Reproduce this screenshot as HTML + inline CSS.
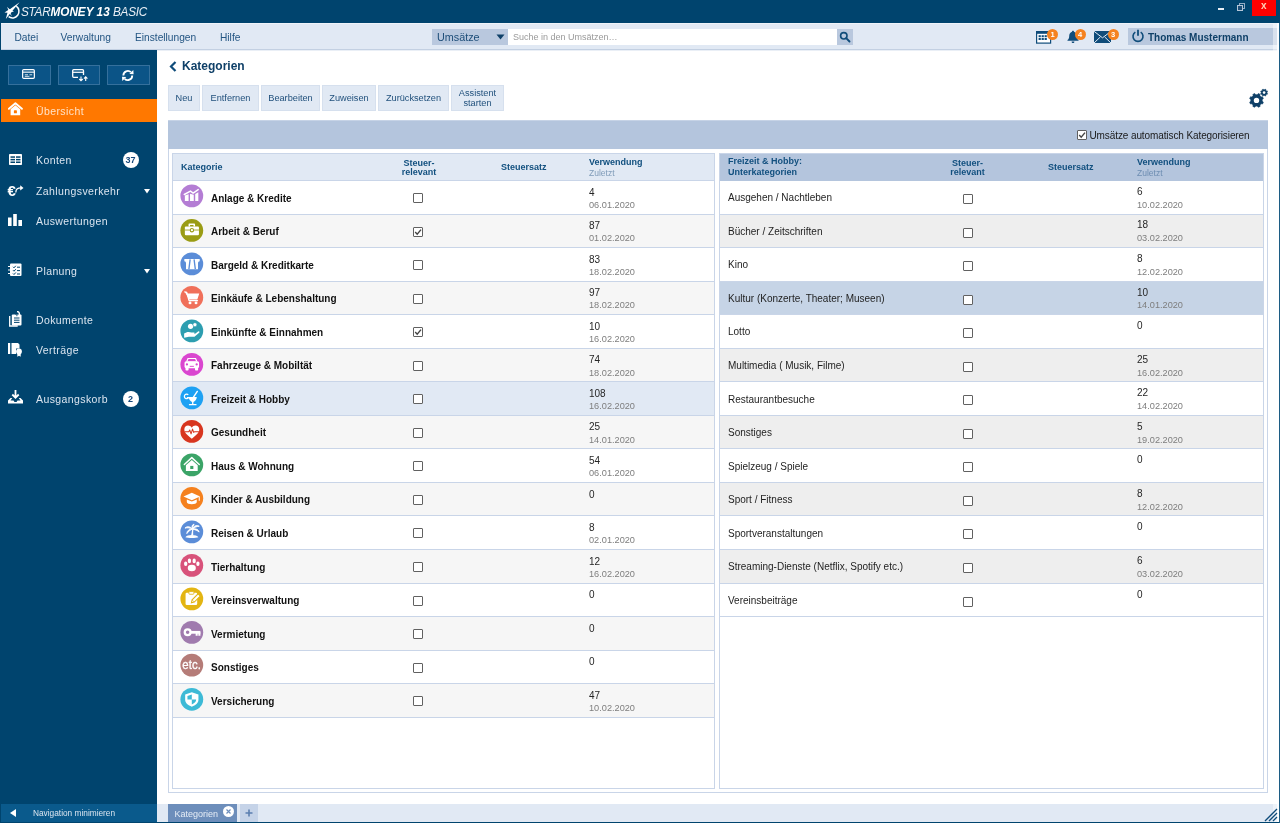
<!DOCTYPE html>
<html><head><meta charset="utf-8"><title>StarMoney 13 Basic</title>
<style>
*{box-sizing:border-box;margin:0;padding:0}
html,body{width:1280px;height:823px;overflow:hidden;background:#fff}
#w{position:absolute;left:0;top:0;width:1280px;height:823px;will-change:transform}
body{font-family:"Liberation Sans",sans-serif;position:relative;color:#111}
.a,.t,.cb,.row,.btn,.nav,.mi{position:absolute}
.t{white-space:nowrap;line-height:1}
.cb{border:1px solid #616161;background:#fff;border-radius:1px}
.cb svg{position:absolute;left:-1px;top:-1px}
.nav{left:36px;font-size:10.5px;letter-spacing:.4px;color:#dbe5f0;white-space:nowrap;line-height:12px}
.mi{top:31.500px;font-size:10.2px;color:#235582;line-height:12px;white-space:nowrap}
.btn{top:85px;height:26px;background:#e1e9f4;border:1px solid #d6e0ee;color:#1f4f7b;font-size:9.2px;text-align:center;line-height:10px;display:flex;align-items:center;justify-content:center}
.row{height:34px;border-bottom:1px solid #c9d5e8}
.hd{font-weight:bold;font-size:9px;color:#12507f}
.nm{font-weight:bold;font-size:10px;color:#111}
.rn{font-size:10px;color:#1e1e1e}
.ct{font-size:10px;color:#262626}
.dt{font-size:9.2px;color:#7e7e7e}
.badge{position:absolute;width:11px;height:11px;border-radius:50%;background:#f5821f;color:#fff;font-size:7.5px;font-weight:bold;text-align:center;line-height:11px}
.sb{position:absolute;top:65px;width:42.500px;height:20px;background:#0b5487;border:1px solid #35709c}
.nb{position:absolute;left:122.500px;width:16px;height:16px;border-radius:50%;background:#fff;color:#14477a;font-size:9px;font-weight:bold;text-align:center;line-height:16.500px}
</style></head><body>
<div id="w">
<div class="a" style="left:0;top:0;width:1280px;height:823px;background:#00446e"></div>
<div class="a" style="left:1px;top:23px;width:1278px;height:27px;background:#e1e9f4;border-top:1px solid #eef3f9;border-bottom:1px solid #c3d0e2"></div>
<div class="a" style="left:157px;top:50px;width:1122px;height:754px;background:#fff;border-top:1px solid #eaeff6"></div>
<div class="a" style="left:157px;top:804px;width:1122px;height:18px;background:#e1e9f4"></div>
<div class="a" style="left:1px;top:804px;width:156px;height:18px;background:#0a5a8c"></div>
<svg class="a" style="left:0px;top:0px" width="24" height="22" viewBox="0 0 24 22"><path d="M16.300 6.200A6.300 6.300 0 0 1 8.600 16.700" fill="none" stroke="#fff" stroke-width="1.500"/><path d="M19.600 2.300L11 12.600 5.800 19l2.300-8.600z" fill="#fff"/><path d="M4.500 12.400l4.500-2.800 5 1.700-4.400 1.700z" fill="#fff"/><path d="M7 6.800l3.600 3.400-1.600 1.300z" fill="#fff"/><path d="M10.200 12l1.600 4.200-2.600-3.200z" fill="#fff"/></svg>
<div class="t" style="left:21px;top:4.500px;font-size:13px;color:#fff;font-style:italic;line-height:14px;transform:scaleX(.905);transform-origin:0 0"><span style="letter-spacing:-.3px;color:#e8eef5">STAR</span><b>MONEY 13</b>&nbsp;<span style="letter-spacing:-.3px;color:#e8eef5">BASIC</span></div>
<div class="a" style="left:1218px;top:8px;width:6px;height:2px;background:#e6edf4"></div>
<div class="a" style="left:1239px;top:3px;width:6px;height:6px;border:1.500px solid #93abc4"></div>
<div class="a" style="left:1237px;top:5px;width:6px;height:6px;border:1.500px solid #b4c6d8;background:#1d4f78"></div>
<div class="a" style="left:1252px;top:0;width:24px;height:16px;background:#ff0000"></div>
<div class="t" style="left:1261px;top:1px;font-size:10px;font-weight:bold;color:#ffd0b4;line-height:10px">x</div>
<div class="mi" style="left:14.5px">Datei</div>
<div class="mi" style="left:60.5px">Verwaltung</div>
<div class="mi" style="left:135px">Einstellungen</div>
<div class="mi" style="left:220px">Hilfe</div>
<div class="a" style="left:432px;top:29px;width:76px;height:16px;background:#b9c8de"></div>
<div class="t" style="left:437px;top:30.500px;font-size:10.800px;color:#1d4d78;line-height:12px">Umsätze</div>
<svg class="a" style="left:496px;top:34px" width="9" height="6" viewBox="0 0 9 6"><path d="M.5.500h8L4.500 5.500z" fill="#0f4068"/></svg>
<div class="a" style="left:508px;top:29px;width:329px;height:16px;background:#fff"></div>
<div class="t" style="left:513px;top:32px;font-size:9px;color:#9a9a9a;line-height:10px">Suche in den Umsätzen…</div>
<div class="a" style="left:837px;top:29px;width:16px;height:16px;background:#b9c8de"></div>
<svg class="a" style="left:839px;top:31px" width="12" height="12" viewBox="0 0 12 12"><circle cx="4.800" cy="4.800" r="3.200" fill="none" stroke="#0f4c7a" stroke-width="1.600"/><path d="M7.200 7.200l3.300 3.300" stroke="#0f4c7a" stroke-width="1.900" stroke-linecap="round"/></svg>
<svg class="a" style="left:1036px;top:31px" width="16" height="13" viewBox="0 0 16 13"><rect x=".600" y=".600" width="14" height="11.500" fill="#fff" stroke="#0f4c7a" stroke-width="1.200"/><rect x=".600" y=".600" width="14" height="2.200" fill="#0f4c7a"/><g fill="#0f4c7a"><rect x="2.600" y="4.200" width="2.200" height="2"/><rect x="5.600" y="4.200" width="2.200" height="2"/><rect x="8.600" y="4.200" width="2.200" height="2"/><rect x="2.600" y="7" width="2.200" height="2"/><rect x="5.600" y="7" width="2.200" height="2"/><rect x="8.600" y="7" width="2.200" height="2"/></g></svg>
<div class="badge" style="left:1047px;top:28.500px">1</div>
<svg class="a" style="left:1066px;top:30px" width="14" height="14" viewBox="0 0 14 14"><path d="M7 .800c.700 0 1 .500 1 1 2 .600 2.800 2.400 2.800 4.400 0 2 .600 3 1.700 3.800v.800H1.500V10c1.100-.800 1.700-1.800 1.700-3.800 0-2 .800-3.800 2.800-4.400 0-.500.300-1 1-1z" fill="#0f4c7a"/><path d="M5.600 11.600h2.800c0 1-.600 1.500-1.400 1.500s-1.400-.500-1.400-1.500z" fill="#0f4c7a"/></svg>
<div class="badge" style="left:1074.500px;top:28.500px">4</div>
<svg class="a" style="left:1094px;top:31px" width="18" height="12" viewBox="0 0 18 12"><rect x="0" y="0" width="17" height="12" fill="#0f4c7a"/><path d="M0 .300l8.500 6.500L17 .300M0 12l6.300-6M17 12l-6.300-6" stroke="#e1e9f4" stroke-width="1" fill="none"/></svg>
<div class="badge" style="left:1107.500px;top:28.500px">3</div>
<div class="a" style="left:1128px;top:28px;width:151px;height:17px;background:#b9c8de"></div>
<svg class="a" style="left:1131px;top:29px" width="14" height="14" viewBox="0 0 14 14"><path d="M4.300 3.200a5 5 0 1 0 5.400 0" fill="none" stroke="#0f4c7a" stroke-width="1.600"/><path d="M7 .800v6" stroke="#0f4c7a" stroke-width="1.800"/></svg>
<div class="t" style="left:1148px;top:31.500px;font-size:10px;font-weight:bold;color:#0f4068;line-height:11px">Thomas Mustermann</div>
<div class="a" style="left:1273px;top:24px;width:4px;height:798px;background:rgba(255,255,255,.45)"></div>
<div class="a" style="left:1277px;top:23px;width:2px;height:799px;background:rgba(255,255,255,.92)"></div>
<div class="a" style="left:1279px;top:23px;width:1px;height:800px;background:#1c5c84"></div>
<div class="sb" style="left:8px;width:42.5px"></div>
<div class="sb" style="left:57.5px;width:42.5px"></div>
<div class="sb" style="left:107px;width:42.5px"></div>
<svg class="a" style="left:22px;top:69px" width="13" height="10.500" viewBox="0 0 14 12" preserveAspectRatio="none"><rect x=".700" y=".700" width="12.600" height="10" rx="1.200" fill="none" stroke="#fff" stroke-width="1.300"/><path d="M1 3.600h12" stroke="#fff" stroke-width="1.300"/><path d="M3 6.600h3.500M8 6.600h3M3 8.400h5" stroke="#fff" stroke-width=".9"/></svg>
<svg class="a" style="left:72px;top:69px" width="17" height="13" viewBox="0 0 17 13"><path d="M11.500 6V1.700a1 1 0 0 0-1-1H1.700a1 1 0 0 0-1 1v5.600a1 1 0 0 0 1 1H6" fill="none" stroke="#fff" stroke-width="1.300"/><path d="M1 3.300h10.500" stroke="#fff" stroke-width="1.200"/><path d="M9 7.500v4M7.300 10l1.700 1.800 1.700-1.800M13.700 12V8M12 9.700l1.700-1.800 1.700 1.800" stroke="#fff" stroke-width="1.100" fill="none"/></svg>
<svg class="a" style="left:121px;top:69px" width="14" height="13" viewBox="0 0 14 13"><path d="M2.400 6.400A4.400 4.400 0 0 1 9.900 3.200M11.200 6.600A4.400 4.400 0 0 1 3.700 9.800" fill="none" stroke="#fff" stroke-width="1.900"/><path d="M8.300 4.900l4.300.3-.3-4.300zM5.300 8.100L1 7.800l.3 4.300z" fill="#fff"/></svg>
<div class="a" style="left:1px;top:99px;width:156px;height:23px;background:#ff7800"></div>
<svg class="a" style="left:8px;top:102px" width="15" height="14" viewBox="0 0 15 14"><path d="M.900 6.800L7.400 1.300l6.500 5.500" stroke="#fff" stroke-width="1.900" fill="none" stroke-linecap="round" stroke-linejoin="round"/><path d="M2.600 7.300l4.800-4 4.800 4v5.900H2.600z" fill="#fff"/><rect x="5.900" y="8.300" width="3" height="3" rx=".6" fill="#ff7800"/></svg>
<div class="nav" style="top:104.500px;color:#ffe3c8">Übersicht</div>
<svg class="a" style="left:9px;top:154px" width="13" height="11" viewBox="0 0 13 11"><rect width="13" height="11" rx=".8" fill="#fff"/><g fill="#00446e"><rect x="1.500" y="2.300" width="4.500" height="1.500"/><rect x="7" y="2.300" width="4.500" height="1.500"/><rect x="1.500" y="4.900" width="4.500" height="1.500"/><rect x="7" y="4.900" width="4.500" height="1.500"/><rect x="1.500" y="7.500" width="4.500" height="1.500"/><rect x="7" y="7.500" width="4.500" height="1.500"/></g></svg>
<div class="nav" style="top:154px">Konten</div>
<div class="nb" style="top:152px">37</div>
<div class="t" style="left:7.500px;top:184px;font-size:15px;font-weight:bold;color:#fff;line-height:14px">€</div>
<svg class="a" style="left:15px;top:185px" width="9" height="8" viewBox="0 0 9 8"><path d="M.800 7.500C.800 4 3 2.800 6 2.800" stroke="#fff" stroke-width="1.300" fill="none"/><path d="M5.200 .300L8.500 2.900 5.200 5.500z" fill="#fff"/></svg>
<div class="nav" style="top:185px">Zahlungsverkehr</div>
<svg class="a" style="left:144px;top:189px" width="6" height="5" viewBox="0 0 6 5"><path d="M0 0h6L3 4.500z" fill="#fff"/></svg>
<svg class="a" style="left:8px;top:214px" width="15" height="12" viewBox="0 0 15 12"><rect x="0" y="3.500" width="3.600" height="8.500" fill="#fff"/><rect x="5.200" y="0" width="3.600" height="12" fill="#fff"/><rect x="10.400" y="6" width="3.600" height="6" fill="#fff"/></svg>
<div class="nav" style="top:215px">Auswertungen</div>
<svg class="a" style="left:8px;top:263px" width="14" height="14" viewBox="0 0 14 14"><rect x="2" y=".500" width="11.500" height="12.500" rx="1" fill="#fff"/><path d="M0 3.500h3.500M0 7h3.500M0 10.500h3.500" stroke="#fff" stroke-width="1.200"/><path d="M5 3.800l1 1 1.800-2M5 7.200l1 1 1.800-2M5 10.500l1 1 1.800-2" stroke="#00446e" stroke-width="1" fill="none"/><path d="M9 4.200h3M9 7.600h3M9 11h3" stroke="#00446e" stroke-width="1"/><path d="M.500 3.500h2.500M.500 7h2.500M.500 10.500h2.500" stroke="#00446e" stroke-width=".01"/></svg>
<div class="nav" style="top:265px">Planung</div>
<svg class="a" style="left:144px;top:269px" width="6" height="5" viewBox="0 0 6 5"><path d="M0 0h6L3 4.500z" fill="#fff"/></svg>
<svg class="a" style="left:9px;top:311px" width="14" height="16" viewBox="0 0 14 16"><path d="M.700 5v10h8" stroke="#fff" stroke-width="1.300" fill="none"/><rect x="2.800" y="3.500" width="9.700" height="11" rx="1" fill="#fff"/><path d="M8 .600c2.500 0 2.500 3 2.500 3v2" stroke="#fff" stroke-width="1.300" fill="none"/><path d="M5 7h5.500M5 9.200h5.500M5 11.400h5.500" stroke="#00446e" stroke-width="1"/><path d="M6.500 3.500V2.200c0-1 1.400-1 1.400 0v3" stroke="#00446e" stroke-width=".9" fill="none"/></svg>
<div class="nav" style="top:314px">Dokumente</div>
<svg class="a" style="left:8px;top:342px" width="15" height="15" viewBox="0 0 15 15"><rect x="0" y="1" width="2.200" height="11" fill="#fff"/><path d="M3.500 1h6.500l1.500 1.500V6.500H8V12H3.500z" fill="#fff"/><circle cx="11" cy="9.500" r="2.900" fill="#fff"/><path d="M9.300 11.500V14.800l1.700-1.100 1.700 1.100V11.500z" fill="#fff"/></svg>
<div class="nav" style="top:344px">Verträge</div>
<svg class="a" style="left:8px;top:390px" width="15" height="14" viewBox="0 0 15 14"><path d="M7.500 0v7M4.300 4.500l3.200 3.300 3.200-3.300" stroke="#fff" stroke-width="1.800" fill="none"/><path d="M0 13.500V10.500l2.500-2.500h1.800L2.500 10.500h3l1 1.500h2l1-1.500h3L10.700 8h1.800l2.500 2.500v3z" fill="#fff"/></svg>
<div class="nav" style="top:393px">Ausgangskorb</div>
<div class="nb" style="top:391px">2</div>
<svg class="a" style="left:10px;top:809px" width="6" height="8" viewBox="0 0 6 8"><path d="M6 0v8L0 4z" fill="#fff"/></svg>
<div class="t" style="left:33px;top:808px;font-size:8.300px;color:#dbe5f0;line-height:10px">Navigation minimieren</div>
<svg class="a" style="left:169px;top:61px" width="8" height="11" viewBox="0 0 8 11"><path d="M6.500 1L2 5.500 6.500 10" stroke="#0f4c7a" stroke-width="2.200" fill="none"/></svg>
<div class="t" style="left:182px;top:60px;font-size:12px;font-weight:bold;color:#0f4068;line-height:13px;letter-spacing:0">Kategorien</div>
<div class="btn" style="left:168px;width:32px">Neu</div>
<div class="btn" style="left:202px;width:57px">Entfernen</div>
<div class="btn" style="left:261px;width:59px">Bearbeiten</div>
<div class="btn" style="left:322px;width:54px">Zuweisen</div>
<div class="btn" style="left:378px;width:71px">Zurücksetzen</div>
<div class="btn" style="left:451px;width:53px">Assistent<br>starten</div>
<svg class="a" style="left:1249px;top:88px" width="20" height="20" viewBox="0 0 20 20"><path d="M13.13 13.29L14.29 14.09L13.50 16.01L12.11 15.75L10.85 17.01L11.11 18.40L9.19 19.19L8.39 18.03L6.61 18.03L5.81 19.19L3.89 18.40L4.15 17.01L2.89 15.75L1.50 16.01L0.71 14.09L1.87 13.29L1.87 11.51L0.71 10.71L1.50 8.79L2.89 9.05L4.15 7.79L3.89 6.40L5.81 5.61L6.61 6.77L8.39 6.77L9.19 5.61L11.11 6.40L10.85 7.79L12.11 9.05L13.50 8.79L14.29 10.71L13.13 11.51z" fill="#0f4068" stroke="#0f4068" stroke-width=".7" stroke-linejoin="round"/><circle cx="7.5" cy="12.4" r="2.7" fill="#fff"/><path d="M17.96 5.05L18.59 5.47L18.18 6.46L17.45 6.30L16.80 6.95L16.96 7.68L15.97 8.09L15.55 7.46L14.65 7.46L14.23 8.09L13.24 7.68L13.40 6.95L12.75 6.30L12.02 6.46L11.61 5.47L12.24 5.05L12.24 4.15L11.61 3.73L12.02 2.74L12.75 2.90L13.40 2.25L13.24 1.52L14.23 1.11L14.65 1.74L15.55 1.74L15.97 1.11L16.96 1.52L16.80 2.25L17.45 2.90L18.18 2.74L18.59 3.73L17.96 4.15z" fill="#0f4068" stroke="#0f4068" stroke-width=".5" stroke-linejoin="round"/><circle cx="15.1" cy="4.6" r="1.3" fill="#fff"/></svg>
<div class="a" style="left:168px;top:120px;width:1100px;height:29px;background:linear-gradient(#c6d3e6 0,#c6d3e6 1px,#b4c5dd 1px)"></div>
<div class="cb" style="left:1077px;top:130px;width:10px;height:10px"><svg width="10" height="10" viewBox="0 0 10 10"><path d="M2.200 5l2 2.200L8 2.600" stroke="#444" stroke-width="1.400" fill="none"/></svg></div>
<div class="t" style="left:1089.500px;top:130px;font-size:10px;color:#1a1a1a;line-height:11px;letter-spacing:-.1px">Umsätze automatisch Kategorisieren</div>
<div class="a" style="left:168px;top:149px;width:1100px;height:644px;border:1px solid #c9d5e8;border-top:none;background:#fff"></div>
<div class="a" style="left:172px;top:153px;width:543px;height:636px;border:1px solid #c9d5e8;background:#fff"></div>
<div class="a" style="left:173px;top:154px;width:541px;height:27px;background:#e1e9f4;border-bottom:1px solid #c9d5e8"></div>
<div class="t hd" style="left:181px;top:162.500px">Kategorie</div>
<div class="t hd" style="left:389px;width:60px;top:158.500px;text-align:center;line-height:9px">Steuer-<br>relevant</div>
<div class="t hd" style="left:501px;top:163px">Steuersatz</div>
<div class="t hd" style="left:589px;top:158px">Verwendung</div>
<div class="t" style="left:589px;top:169px;font-size:8.500px;color:#7f9bb8">Zuletzt</div>
<div class="row" style="left:173px;top:181px;width:541px;height:34px;background:#fff"></div>
<svg class="a" style="left:180px;top:184px" width="25" height="25" viewBox="0 0 25 25"><g transform="translate(.4 0.45) scale(1.0364)"><circle cx="11" cy="11" r="11" fill="#b47dd4"/><path d="M4.300 16v-5.400l3.600-1.200V16zM9.300 16V9l3.600 1V16zM14.300 16V9.300l3-1.800V16z" fill="#fff"/><path d="M3.700 9.700l6-3.300 2.600 1.900L17.200 5" stroke="#fff" stroke-width="1.400" fill="none" stroke-linecap="round" stroke-linejoin="round"/></g></svg>
<div class="t nm" style="left:211px;top:194px">Anlage &amp; Kredite</div>
<div class="cb" style="left:413px;top:193px;width:10px;height:10px"></div>
<div class="t ct" style="left:589px;top:188px">4</div>
<div class="t dt" style="left:589px;top:201px">06.01.2020</div>
<div class="row" style="left:173px;top:215px;width:541px;height:33px;background:#f6f6f6"></div>
<svg class="a" style="left:180px;top:219px" width="25" height="25" viewBox="0 0 25 25"><g transform="translate(.4 0.04) scale(1.0364)"><circle cx="11" cy="11" r="11" fill="#9a9c14"/><rect x="4.300" y="7.200" width="13.600" height="8.500" rx="1" fill="#fff"/><path d="M8.600 7.200V5h4.800v2.200" stroke="#fff" stroke-width="1.500" fill="none" stroke-linejoin="round"/><rect x="4.300" y="10.200" width="13.600" height=".8" fill="#9a9c14"/><circle cx="11.100" cy="10.800" r="1.600" fill="#fff" stroke="#9a9c14" stroke-width="1"/></g></svg>
<div class="t nm" style="left:211px;top:227px">Arbeit &amp; Beruf</div>
<div class="cb" style="left:413px;top:227px;width:10px;height:10px"><svg width="10" height="10" viewBox="0 0 10 10"><path d="M2.200 5l2 2.200L8 2.600" stroke="#444" stroke-width="1.400" fill="none"/></svg></div>
<div class="t ct" style="left:589px;top:221px">87</div>
<div class="t dt" style="left:589px;top:234px">01.02.2020</div>
<div class="row" style="left:173px;top:248px;width:541px;height:34px;background:#fff"></div>
<svg class="a" style="left:180px;top:252px" width="25" height="25" viewBox="0 0 25 25"><g transform="translate(.4 0.53) scale(1.0364)"><circle cx="11" cy="11" r="11" fill="#5b8dd8"/><path d="M3.800 6.200h14.800v2.200c-1 .2-1.600.8-1.600 1.800v6H5.400v-6c0-1-.6-1.600-1.600-1.800z" fill="#fff"/><path d="M9.400 6.600L8.200 16M13.200 6.600l1.200 9.400" stroke="#5b8dd8" stroke-width="1.300"/></g></svg>
<div class="t nm" style="left:211px;top:261px">Bargeld &amp; Kreditkarte</div>
<div class="cb" style="left:413px;top:260px;width:10px;height:10px"></div>
<div class="t ct" style="left:589px;top:255px">83</div>
<div class="t dt" style="left:589px;top:268px">18.02.2020</div>
<div class="row" style="left:173px;top:282px;width:541px;height:33px;background:#f6f6f6"></div>
<svg class="a" style="left:180px;top:286px" width="25" height="25" viewBox="0 0 25 25"><g transform="translate(.4 0.02) scale(1.0364)"><circle cx="11" cy="11" r="11" fill="#f0705a"/><path d="M4.200 5.600l2 .6.500 1h11.500l-1.900 5.800H8.400z" fill="#fff"/><path d="M4.200 5.600l1.900.5 2.200 8h8.200" stroke="#fff" stroke-width="1.200" fill="none" stroke-linecap="round" stroke-linejoin="round"/><circle cx="9.300" cy="16.300" r="1.400" fill="#fff"/><circle cx="15.100" cy="16.300" r="1.400" fill="#fff"/></g></svg>
<div class="t nm" style="left:211px;top:294px">Einkäufe &amp; Lebenshaltung</div>
<div class="cb" style="left:413px;top:294px;width:10px;height:10px"></div>
<div class="t ct" style="left:589px;top:288px">97</div>
<div class="t dt" style="left:589px;top:301px">18.02.2020</div>
<div class="row" style="left:173px;top:315px;width:541px;height:34px;background:#fff"></div>
<svg class="a" style="left:180px;top:319px" width="25" height="25" viewBox="0 0 25 25"><g transform="translate(.4 0.51) scale(1.0364)"><circle cx="11" cy="11" r="11" fill="#2d9eb0"/><circle cx="9.800" cy="6.600" r="2.500" fill="#fff"/><circle cx="14" cy="5" r="1.900" fill="#fff" stroke="#2d9eb0" stroke-width=".5"/><path d="M3.600 13.600c2.200-1.800 4.800-2 7-1h2.400c1.100 0 1.100 1.500 0 1.500h-2.500 3.300l3.300-2.600c1-.6 1.800.5 1 1.300l-4.500 3.900H8.200l-4.600.9z" fill="#fff"/></g></svg>
<div class="t nm" style="left:211px;top:328px">Einkünfte &amp; Einnahmen</div>
<div class="cb" style="left:413px;top:327px;width:10px;height:10px"><svg width="10" height="10" viewBox="0 0 10 10"><path d="M2.200 5l2 2.200L8 2.600" stroke="#444" stroke-width="1.400" fill="none"/></svg></div>
<div class="t ct" style="left:589px;top:322px">10</div>
<div class="t dt" style="left:589px;top:335px">16.02.2020</div>
<div class="row" style="left:173px;top:349px;width:541px;height:33px;background:#f6f6f6"></div>
<svg class="a" style="left:180px;top:353px" width="25" height="25" viewBox="0 0 25 25"><g transform="translate(.4 0.00) scale(1.0364)"><circle cx="11" cy="11" r="11" fill="#da46cf"/><path d="M7 4.800h8l1.500 3.400h-11z" fill="#fff"/><path d="M7.800 5.800h6.400l.9 2.200H6.900z" fill="#da46cf"/><rect x="4" y="7.900" width="14" height="6.700" rx="1.600" fill="#fff"/><rect x="4.900" y="13.600" width="3" height="3.200" rx=".7" fill="#fff"/><rect x="14.100" y="13.600" width="3" height="3.200" rx=".7" fill="#fff"/><circle cx="6.300" cy="11" r="1.100" fill="#da46cf"/><circle cx="15.700" cy="11" r="1.100" fill="#da46cf"/><rect x="9" y="12.400" width="4" height=".9" fill="#da46cf"/></g></svg>
<div class="t nm" style="left:211px;top:361px">Fahrzeuge &amp; Mobiltät</div>
<div class="cb" style="left:413px;top:361px;width:10px;height:10px"></div>
<div class="t ct" style="left:589px;top:355px">74</div>
<div class="t dt" style="left:589px;top:369px">18.02.2020</div>
<div class="row" style="left:173px;top:382px;width:541px;height:34px;background:#e1e9f4"></div>
<svg class="a" style="left:180px;top:386px" width="25" height="25" viewBox="0 0 25 25"><g transform="translate(.4 0.49) scale(1.0364)"><circle cx="11" cy="11" r="11" fill="#1ea1f3"/><path d="M8 10.200h7.800c0 2.600-1.700 4.400-3.900 4.900-2.200-.5-3.900-2.300-3.900-4.900z" fill="#fff"/><path d="M11.900 14v3.600" stroke="#fff" stroke-width="1.300"/><path d="M8.800 17.500h6.200" stroke="#fff" stroke-width="1.300" stroke-linecap="round"/><path d="M12.300 10.800l4-6" stroke="#fff" stroke-width="1.400" stroke-linecap="round"/><path d="M7.600 8a2.200 2.200 0 1 0 .3 2.700H6.200" fill="none" stroke="#fff" stroke-width="1.200"/></g></svg>
<div class="t nm" style="left:211px;top:395px">Freizeit &amp; Hobby</div>
<div class="cb" style="left:413px;top:394px;width:10px;height:10px"></div>
<div class="t ct" style="left:589px;top:389px">108</div>
<div class="t dt" style="left:589px;top:402px">16.02.2020</div>
<div class="row" style="left:173px;top:416px;width:541px;height:33px;background:#f6f6f6"></div>
<svg class="a" style="left:180px;top:419px" width="25" height="25" viewBox="0 0 25 25"><g transform="translate(.4 0.98) scale(1.0364)"><circle cx="11" cy="11" r="11" fill="#d8361f"/><path d="M11 18C5 13.600 3.800 11.200 3.800 9.200 3.800 7 5.400 5.400 7.400 5.400c1.500 0 2.800.8 3.600 2.100.8-1.300 2.100-2.100 3.600-2.100 2 0 3.600 1.600 3.600 3.800 0 2-1.200 4.400-7.200 8.800z" fill="#fff"/><path d="M4.200 11.400h3.900l.9-1.800 1.300 3.800 1.400-4.600 1.100 3.200.7-.6h4.400" stroke="#d8361f" stroke-width="1" fill="none" stroke-linejoin="round"/></g></svg>
<div class="t nm" style="left:211px;top:428px">Gesundheit</div>
<div class="cb" style="left:413px;top:428px;width:10px;height:10px"></div>
<div class="t ct" style="left:589px;top:422px">25</div>
<div class="t dt" style="left:589px;top:436px">14.01.2020</div>
<div class="row" style="left:173px;top:449px;width:541px;height:34px;background:#fff"></div>
<svg class="a" style="left:180px;top:453px" width="25" height="25" viewBox="0 0 25 25"><g transform="translate(.4 0.47) scale(1.0364)"><circle cx="11" cy="11" r="11" fill="#3ba467"/><path d="M3.800 10.600L11 4l7.200 6.600" stroke="#fff" stroke-width="1.400" fill="none" stroke-linecap="round" stroke-linejoin="round"/><path d="M5.300 11.400L11 6.200l5.700 5.200v5.400H5.300z" fill="#fff"/><rect x="9.500" y="12" width="3" height="3" fill="#3ba467"/></g></svg>
<div class="t nm" style="left:211px;top:462px">Haus &amp; Wohnung</div>
<div class="cb" style="left:413px;top:461px;width:10px;height:10px"></div>
<div class="t ct" style="left:589px;top:456px">54</div>
<div class="t dt" style="left:589px;top:469px">06.01.2020</div>
<div class="row" style="left:173px;top:483px;width:541px;height:33px;background:#f6f6f6"></div>
<svg class="a" style="left:180px;top:486px" width="25" height="25" viewBox="0 0 25 25"><g transform="translate(.4 0.96) scale(1.0364)"><circle cx="11" cy="11" r="11" fill="#f5811e"/><path d="M11 5.600l8 3.700-8 3.500-8-3.500z" fill="#fff"/><path d="M6.200 12v2.600c0 2.800 9.600 2.800 9.600 0V12L11 14.100z" fill="#fff"/><path d="M18.200 9.600v3.800" stroke="#fff" stroke-width="1"/></g></svg>
<div class="t nm" style="left:211px;top:495px">Kinder &amp; Ausbildung</div>
<div class="cb" style="left:413px;top:495px;width:10px;height:10px"></div>
<div class="t ct" style="left:589px;top:490px">0</div>
<div class="row" style="left:173px;top:516px;width:541px;height:34px;background:#fff"></div>
<svg class="a" style="left:180px;top:520px" width="25" height="25" viewBox="0 0 25 25"><g transform="translate(.4 0.45) scale(1.0364)"><circle cx="11" cy="11" r="11" fill="#5b8dd8"/><path d="M11.300 9c-.2 2-.5 3.600-.9 5.200h2c-.2-1.600-.2-3.300.1-5.200z" fill="#fff"/><path d="M11.600 8.400C9.600 5.600 6.400 5.400 4.400 7.400c2.400-.7 4.600-.3 7.200 1zM11.600 8.400c1-3.200 4-4.200 6.600-2.800-2.400.1-4.600 1-6.600 2.800zM11.600 8.400c3.200-.9 5.800.3 6.500 2.800-1.700-1.500-3.800-2.400-6.500-2.800zM11.600 8.400c-3.300-.2-5.400 1.700-5.400 4.300 1.300-2 3-3.300 5.400-4.300zM11.600 8.400c-1-2.600-.2-4.300 1.600-4.900-.9 1.400-1.400 2.900-1.600 4.900z" fill="#fff" stroke="#fff" stroke-width=".9" stroke-linejoin="round"/><path d="M4.800 16.300c1.600-3 11-3 12.600 0-2.200.9-10.400.9-12.600 0z" fill="#fff"/></g></svg>
<div class="t nm" style="left:211px;top:529px">Reisen &amp; Urlaub</div>
<div class="cb" style="left:413px;top:528px;width:10px;height:10px"></div>
<div class="t ct" style="left:589px;top:523px">8</div>
<div class="t dt" style="left:589px;top:536px">02.01.2020</div>
<div class="row" style="left:173px;top:550px;width:541px;height:34px;background:#f6f6f6"></div>
<svg class="a" style="left:180px;top:553px" width="25" height="25" viewBox="0 0 25 25"><g transform="translate(.4 0.94) scale(1.0364)"><circle cx="11" cy="11" r="11" fill="#d8527a"/><ellipse cx="11" cy="13.600" rx="3.900" ry="3.200" fill="#fff"/><ellipse cx="5.100" cy="9.500" rx="1.600" ry="2.100" fill="#fff"/><ellipse cx="8.700" cy="6.700" rx="1.600" ry="2.200" fill="#fff"/><ellipse cx="13.300" cy="6.700" rx="1.600" ry="2.200" fill="#fff"/><ellipse cx="16.900" cy="9.500" rx="1.600" ry="2.100" fill="#fff"/></g></svg>
<div class="t nm" style="left:211px;top:563px">Tierhaltung</div>
<div class="cb" style="left:413px;top:562px;width:10px;height:10px"></div>
<div class="t ct" style="left:589px;top:557px">12</div>
<div class="t dt" style="left:589px;top:570px">16.02.2020</div>
<div class="row" style="left:173px;top:584px;width:541px;height:33px;background:#fff"></div>
<svg class="a" style="left:180px;top:587px" width="25" height="25" viewBox="0 0 25 25"><g transform="translate(.4 0.43) scale(1.0364)"><circle cx="11" cy="11" r="11" fill="#e3b512"/><rect x="5" y="5.200" width="11.200" height="11.800" rx="1.200" fill="#fff"/><rect x="8.200" y="4" width="4.800" height="2.600" rx=".8" fill="#fff" stroke="#e3b512" stroke-width=".8"/><path d="M10.600 14.800l.7-2.800 5.800-5.800 2.100 2.100-5.800 5.800z" fill="#fff" stroke="#e3b512" stroke-width="1"/><path d="M11.300 12l2.100 2.100" stroke="#e3b512" stroke-width=".7"/></g></svg>
<div class="t nm" style="left:211px;top:596px">Vereinsverwaltung</div>
<div class="cb" style="left:413px;top:596px;width:10px;height:10px"></div>
<div class="t ct" style="left:589px;top:590px">0</div>
<div class="row" style="left:173px;top:617px;width:541px;height:34px;background:#f6f6f6"></div>
<svg class="a" style="left:180px;top:620px" width="25" height="25" viewBox="0 0 25 25"><g transform="translate(.4 0.92) scale(1.0364)"><circle cx="11" cy="11" r="11" fill="#a07bae"/><circle cx="7" cy="11" r="2.800" fill="none" stroke="#fff" stroke-width="2.200"/><path d="M10 11h9.300" stroke="#fff" stroke-width="2.700"/><path d="M15.700 11v3.200M18.300 11v3.200" stroke="#fff" stroke-width="2"/></g></svg>
<div class="t nm" style="left:211px;top:630px">Vermietung</div>
<div class="cb" style="left:413px;top:629px;width:10px;height:10px"></div>
<div class="t ct" style="left:589px;top:624px">0</div>
<div class="row" style="left:173px;top:651px;width:541px;height:33px;background:#fff"></div>
<svg class="a" style="left:180px;top:653px" width="25" height="25" viewBox="0 0 25 25"><g transform="translate(.4 0.71) scale(1.0364)"><circle cx="11" cy="11" r="11" fill="#b57c78"/><text x="1.900" y="15.200" font-family="Liberation Sans" font-size="12.500" fill="#fff" stroke="#fff" stroke-width=".3" textLength="17.800" lengthAdjust="spacingAndGlyphs">etc.</text></g></svg>
<div class="t nm" style="left:211px;top:663px">Sonstiges</div>
<div class="cb" style="left:413px;top:663px;width:10px;height:10px"></div>
<div class="t ct" style="left:589px;top:657px">0</div>
<div class="row" style="left:173px;top:684px;width:541px;height:34px;background:#f6f6f6"></div>
<svg class="a" style="left:180px;top:687px" width="25" height="25" viewBox="0 0 25 25"><g transform="translate(.4 0.90) scale(1.0364)"><circle cx="11" cy="11" r="11" fill="#3dbad6"/><path d="M11 4.200l6.400 2.100v5.200c0 3.200-2.800 5.300-6.400 6.600-3.600-1.300-6.400-3.400-6.400-6.600V6.300z" fill="#fff"/><path d="M11 6.300v4.900H6.800V7.700zM11 11.200h4.200c0 2.300-1.900 3.800-4.200 4.700z" fill="#3dbad6"/></g></svg>
<div class="t nm" style="left:211px;top:697px">Versicherung</div>
<div class="cb" style="left:413px;top:696px;width:10px;height:10px"></div>
<div class="t ct" style="left:589px;top:691px">47</div>
<div class="t dt" style="left:589px;top:704px">10.02.2020</div>
<div class="a" style="left:719px;top:153px;width:545px;height:636px;border:1px solid #c9d5e8;background:#fff"></div>
<div class="a" style="left:720px;top:154px;width:543px;height:27px;background:#b4c5dd"></div>
<div class="t hd" style="left:728px;top:156px;line-height:10.800px">Freizeit &amp; Hobby:<br>Unterkategorien</div>
<div class="t hd" style="left:937.500px;width:60px;top:158.500px;text-align:center;line-height:9px">Steuer-<br>relevant</div>
<div class="t hd" style="left:1048px;top:163px">Steuersatz</div>
<div class="t hd" style="left:1137px;top:158px">Verwendung</div>
<div class="t" style="left:1137px;top:169px;font-size:8.500px;color:#6d8db2">Zuletzt</div>
<div class="row" style="left:720px;top:181px;width:543px;height:34px;background:#fff"></div>
<div class="t rn" style="left:728px;top:193px">Ausgehen / Nachtleben</div>
<div class="cb" style="left:963px;top:194px;width:10px;height:10px"></div>
<div class="t ct" style="left:1137px;top:187px">6</div>
<div class="t dt" style="left:1137px;top:201px">10.02.2020</div>
<div class="row" style="left:720px;top:215px;width:543px;height:33px;background:#eeeeee"></div>
<div class="t rn" style="left:728px;top:227px">Bücher / Zeitschriften</div>
<div class="cb" style="left:963px;top:228px;width:10px;height:10px"></div>
<div class="t ct" style="left:1137px;top:220px">18</div>
<div class="t dt" style="left:1137px;top:234px">03.02.2020</div>
<div class="row" style="left:720px;top:248px;width:543px;height:34px;background:#fff"></div>
<div class="t rn" style="left:728px;top:260px">Kino</div>
<div class="cb" style="left:963px;top:261px;width:10px;height:10px"></div>
<div class="t ct" style="left:1137px;top:254px">8</div>
<div class="t dt" style="left:1137px;top:268px">12.02.2020</div>
<div class="row" style="left:720px;top:282px;width:543px;height:33px;background:#c6d4e6"></div>
<div class="t rn" style="left:728px;top:294px">Kultur (Konzerte, Theater; Museen)</div>
<div class="cb" style="left:963px;top:295px;width:10px;height:10px"></div>
<div class="t ct" style="left:1137px;top:288px">10</div>
<div class="t dt" style="left:1137px;top:301px">14.01.2020</div>
<div class="row" style="left:720px;top:315px;width:543px;height:34px;background:#fff"></div>
<div class="t rn" style="left:728px;top:327px">Lotto</div>
<div class="cb" style="left:963px;top:328px;width:10px;height:10px"></div>
<div class="t ct" style="left:1137px;top:321px">0</div>
<div class="row" style="left:720px;top:349px;width:543px;height:33px;background:#eeeeee"></div>
<div class="t rn" style="left:728px;top:361px">Multimedia ( Musik, Filme)</div>
<div class="cb" style="left:963px;top:362px;width:10px;height:10px"></div>
<div class="t ct" style="left:1137px;top:355px">25</div>
<div class="t dt" style="left:1137px;top:369px">16.02.2020</div>
<div class="row" style="left:720px;top:382px;width:543px;height:34px;background:#fff"></div>
<div class="t rn" style="left:728px;top:395px">Restaurantbesuche</div>
<div class="cb" style="left:963px;top:395px;width:10px;height:10px"></div>
<div class="t ct" style="left:1137px;top:388px">22</div>
<div class="t dt" style="left:1137px;top:402px">14.02.2020</div>
<div class="row" style="left:720px;top:416px;width:543px;height:33px;background:#eeeeee"></div>
<div class="t rn" style="left:728px;top:428px">Sonstiges</div>
<div class="cb" style="left:963px;top:429px;width:10px;height:10px"></div>
<div class="t ct" style="left:1137px;top:422px">5</div>
<div class="t dt" style="left:1137px;top:436px">19.02.2020</div>
<div class="row" style="left:720px;top:449px;width:543px;height:34px;background:#fff"></div>
<div class="t rn" style="left:728px;top:462px">Spielzeug / Spiele</div>
<div class="cb" style="left:963px;top:462px;width:10px;height:10px"></div>
<div class="t ct" style="left:1137px;top:455px">0</div>
<div class="row" style="left:720px;top:483px;width:543px;height:33px;background:#eeeeee"></div>
<div class="t rn" style="left:728px;top:495px">Sport / Fitness</div>
<div class="cb" style="left:963px;top:496px;width:10px;height:10px"></div>
<div class="t ct" style="left:1137px;top:489px">8</div>
<div class="t dt" style="left:1137px;top:503px">12.02.2020</div>
<div class="row" style="left:720px;top:516px;width:543px;height:34px;background:#fff"></div>
<div class="t rn" style="left:728px;top:529px">Sportveranstaltungen</div>
<div class="cb" style="left:963px;top:529px;width:10px;height:10px"></div>
<div class="t ct" style="left:1137px;top:522px">0</div>
<div class="row" style="left:720px;top:550px;width:543px;height:34px;background:#eeeeee"></div>
<div class="t rn" style="left:728px;top:562px">Streaming-Dienste (Netflix, Spotify etc.)</div>
<div class="cb" style="left:963px;top:563px;width:10px;height:10px"></div>
<div class="t ct" style="left:1137px;top:556px">6</div>
<div class="t dt" style="left:1137px;top:570px">03.02.2020</div>
<div class="row" style="left:720px;top:584px;width:543px;height:33px;background:#fff"></div>
<div class="t rn" style="left:728px;top:596px">Vereinsbeiträge</div>
<div class="cb" style="left:963px;top:597px;width:10px;height:10px"></div>
<div class="t ct" style="left:1137px;top:590px">0</div>
<div class="a" style="left:168px;top:804px;width:69px;height:18px;background:#6d8ebb"></div>
<div class="t" style="left:174.500px;top:809px;font-size:9px;color:#e6edf6;line-height:10px">Kategorien</div>
<svg class="a" style="left:223px;top:806px" width="11" height="11" viewBox="0 0 11 11"><circle cx="5.500" cy="5.500" r="5.500" fill="#fff"/><path d="M3.500 3.500l4 4M7.500 3.500l-4 4" stroke="#6d8ebb" stroke-width="1.200"/></svg>
<div class="a" style="left:240px;top:804px;width:18px;height:18px;background:#c5d3e8"></div>
<svg class="a" style="left:245px;top:809px" width="8" height="8" viewBox="0 0 8 8"><path d="M4 .500v7M.500 4h7" stroke="#5b7fb0" stroke-width="1.600"/></svg>
<svg class="a" style="left:1264px;top:808px" width="14" height="14" viewBox="0 0 14 14"><path d="M1 13L13 1M5 13l8-8M9 13l4-4" stroke="#0f4c7a" stroke-width="1.300"/></svg>
</div>
</body></html>
